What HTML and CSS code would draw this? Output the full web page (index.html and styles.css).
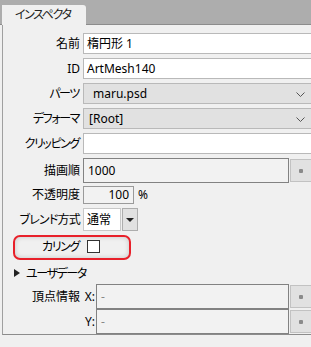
FILE: index.html
```html
<!DOCTYPE html>
<html lang="ja">

<head>
    <meta charset="UTF-8">
    <title>インスペクタ</title>
    <link rel="stylesheet" href="styles.css">
</head>

<body>
    <div class="tabbar">
        <div class="tab">インスペクタ</div>
    </div>
    <div class="panel">
        <div class="row">
            <span class="label">名前</span>
            <div class="field">楕円形 1</div>
        </div>
        <div class="row">
            <span class="label">ID</span>
            <div class="field">ArtMesh140</div>
        </div>
        <div class="row">
            <span class="label kana">パーツ</span>
            <div class="select sel-parts">maru.psd
                <svg class="chev" width="9" height="5" viewBox="0 0 9 5"><path d="M0.5 0.5 L4.5 4.5 L8.5 0.5" fill="none" stroke="#555" stroke-width="1"/></svg>
            </div>
        </div>
        <div class="row">
            <span class="label kana">デフォーマ</span>
            <div class="select">[Root]
                <svg class="chev" width="9" height="5" viewBox="0 0 9 5"><path d="M0.5 0.5 L4.5 4.5 L8.5 0.5" fill="none" stroke="#555" stroke-width="1"/></svg>
            </div>
        </div>
        <div class="row">
            <span class="label kana">クリッピング</span>
            <div class="field"></div>
        </div>
        <div class="row row-order">
            <span class="label">描画順</span>
            <div class="with-btn">
                <div class="box">1000</div>
                <div class="dot-btn"><span class="dot"></span></div>
            </div>
        </div>
        <div class="row row-opacity">
            <span class="label">不透明度</span>
            <div class="opacity">
                <div class="box num">100</div>
                <span class="unit">%</span>
            </div>
        </div>
        <div class="row row-blend">
            <span class="label mixed">ブレンド方式</span>
            <div class="blend">
                <div class="combo">通常</div>
                <div class="drop"><span class="tri"></span></div>
            </div>
        </div>
        <div class="row row-cull">
            <span class="label kana">カリング</span>
            <span class="check"></span>
            <div class="highlight"></div>
        </div>
        <div class="userdata">
            <span class="arrow"></span>
            <span class="kana">ユーザデータ</span>
        </div>
        <div class="vrow">
            <span class="label">頂点情報</span>
            <span class="axis">X:</span>
            <div class="with-btn">
                <div class="box dash">-</div>
                <div class="dot-btn"><span class="dot"></span></div>
            </div>
        </div>
        <div class="vrow">
            <span class="label"></span>
            <span class="axis">Y:</span>
            <div class="with-btn">
                <div class="box dash">-</div>
                <div class="dot-btn"><span class="dot"></span></div>
            </div>
        </div>
    </div>
</body>

</html>
```

FILE: styles.css
```css
html,
body {
    margin: 0;
    overflow: hidden;
}

body {
    width: 311px;
    height: 347px;
    background: #f0f0f0;
    font-family: 'Noto Sans', 'Noto Sans CJK JP', sans-serif;
    font-size: 12px;
    font-feature-settings: "palt";
    color: #000;
}

.tabbar {
    height: 24px;
    background: #adadad;
    border-bottom: 1px solid #8c8c8c;
    display: flex;
    align-items: flex-end;
    padding-left: 2px;
}

.tab {
    width: 71px;
    height: 20px;
    line-height: 20px;
    padding-left: 13px;
    margin-bottom: -1px;
    background: #f0f0f0;
    border-top-right-radius: 3px;
    color: #222;
    letter-spacing: -1.4px;
}

.panel {
    margin-left: 2px;
    width: 318px;
    height: 310px;
    border-left: 1px solid #a0a0a0;
    border-bottom: 1px solid #8c8c8c;
    padding-top: 8px;
    box-sizing: border-box;
    display: flex;
    flex-direction: column;
    gap: 4px;
}

.row {
    display: grid;
    grid-template-columns: 77px 1fr;
    column-gap: 3px;
    align-items: center;
    height: 21px;
    position: relative;
}

.label {
    text-align: right;
    white-space: nowrap;
    line-height: 16px;
}

.kana {
    letter-spacing: -1.4px;
    padding-right: 1px;
}

.mixed {
    letter-spacing: -0.8px;
}

.field,
.select {
    height: 21px;
    box-sizing: border-box;
    border: 1px solid #b9b9b9;
    background: #fff;
    padding-left: 3px;
    line-height: 19px;
    position: relative;
}

.select {
    background: #e1e1e1;
    padding-left: 5px;
}

.sel-parts {
    padding-left: 9px;
}

.chev {
    position: absolute;
    right: 14px;
    top: 8px;
}

.row-order {
    height: 25px;
}

.with-btn {
    display: flex;
    gap: 1px;
    height: 100%;
}

.box {
    width: 206px;
    box-sizing: border-box;
    border: 1px solid #828282;
    background: #f2f2f2;
    padding-left: 4px;
    line-height: 23px;
}

.dot-btn {
    width: 22px;
    height: 23px;
    margin-top: 1px;
    box-sizing: border-box;
    border: 1px solid #c2c2c2;
    background: #e1e1e1;
    display: flex;
    align-items: center;
    justify-content: center;
}

.dot {
    width: 4px;
    height: 4px;
    background: #8a8a8a;
    border-radius: 1px;
}

.row-opacity {
    height: 18px;
    margin-top: -1px;
}

.opacity {
    display: flex;
    align-items: center;
    gap: 4px;
}

.box.num {
    width: 51px;
    height: 18px;
    line-height: 16px;
    text-align: right;
    padding-right: 4px;
    border-color: #9a9a9a;
}

.unit {
    line-height: 16px;
}

.row-blend {
    height: 23px;
}

.blend {
    display: flex;
    gap: 1px;
    height: 23px;
}

.combo {
    width: 38px;
    box-sizing: border-box;
    border: 1px solid #c8c8c8;
    background: #fff;
    padding-left: 3px;
    line-height: 21px;
}

.drop {
    width: 16px;
    box-sizing: border-box;
    border: 1px solid #adadad;
    background: #e1e1e1;
    display: flex;
    align-items: center;
    justify-content: center;
}

.tri {
    width: 0;
    height: 0;
    border-left: 4px solid transparent;
    border-right: 4px solid transparent;
    border-top: 4px solid #222;
}

.row-cull {
    height: 24px;
    grid-template-columns: 77px 14px;
    column-gap: 7px;
}

.check {
    width: 13px;
    height: 13px;
    box-sizing: border-box;
    border: 1px solid #333;
    background: #fff;
}

.highlight {
    position: absolute;
    left: 10px;
    top: 0;
    width: 118px;
    height: 25px;
    box-sizing: border-box;
    border: 2px solid #e8202a;
    border-radius: 7px;
    box-shadow: inset 0 0 5px rgba(0, 0, 0, 0.18);
}

.userdata {
    height: 22px;
    display: flex;
    align-items: center;
    gap: 6px;
    padding-left: 11px;
}

.arrow {
    width: 0;
    height: 0;
    border-top: 4px solid transparent;
    border-bottom: 4px solid transparent;
    border-left: 6px solid #222;
}

.vrow {
    display: grid;
    grid-template-columns: 77px 16px 1fr;
    align-items: center;
    height: 25px;
    margin-top: -4px;
}

.axis {
    text-align: right;
    padding-right: 1px;
    line-height: 16px;
}

.box.dash {
    width: 193px;
    color: #888;
}
```
